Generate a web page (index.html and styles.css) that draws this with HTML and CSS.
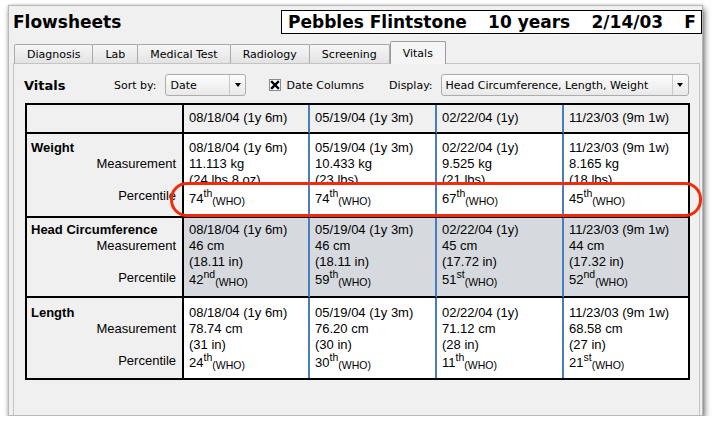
FILE: index.html
```html
<!DOCTYPE html>
<html lang="en">
<head>
  <meta charset="UTF-8" />
  <title>Flowsheets</title>
  <link rel="stylesheet" href="styles.css">
</head>
<body>

<div class="window">
  <div class="titlebar">
    <h1 class="title">Flowsheets</h1>
    <div class="patient">
      <span>Pebbles Flintstone</span><span>10 years</span><span>2/14/03</span><span>F</span>
    </div>
  </div>

  <div class="tabs">
    <div class="tab">Diagnosis</div>
    <div class="tab">Lab</div>
    <div class="tab">Medical Test</div>
    <div class="tab">Radiology</div>
    <div class="tab">Screening</div>
    <div class="tab active">Vitals</div>
  </div>

  <div class="panel">
    <div class="toolbar">
      <span class="section">Vitals</span>
      <span>Sort by:</span>
      <div class="select sel-date"><span>Date</span><span class="drop"></span></div>
      <svg class="check" width="12" height="12" viewBox="0 0 12 12">
        <rect x="0.5" y="0.5" width="11" height="11" fill="#fff" stroke="#8a8a8a"/>
        <path d="M3 3 L9 9 M9 3 L3 9" stroke="#000" stroke-width="2.4" stroke-linecap="square"/>
      </svg>
      <span class="check-label">Date Columns</span>
      <span class="display-label">Display:</span>
      <div class="select sel-display"><span>Head Circumference, Length, Weight</span><span class="drop"></span></div>
    </div>

    <div class="grid-wrap">
      <table class="vitals">
        <tr class="head">
          <th class="lab c0"></th>
          <th class="c1">08/18/04 (1y 6m)</th>
          <th class="c2">05/19/04 (1y 3m)</th>
          <th class="c3">02/22/04 (1y)</th>
          <th class="c4">11/23/03 (9m 1w)</th>
        </tr>
        <tr class="weight">
          <td class="lab">
            <div class="name">Weight</div>
            <div class="r">Measurement</div>
            <div class="r">&nbsp;</div>
            <div class="r">Percentile</div>
          </td>
          <td>
            <div class="meas"><div>08/18/04 (1y 6m)</div><div>11.113 kg</div><div>(24 lbs 8 oz)</div></div>
            <div class="pct">74<sup>th</sup><sub>(WHO)</sub></div>
          </td>
          <td>
            <div class="meas"><div>05/19/04 (1y 3m)</div><div>10.433 kg</div><div>(23 lbs)</div></div>
            <div class="pct">74<sup>th</sup><sub>(WHO)</sub></div>
          </td>
          <td>
            <div class="meas"><div>02/22/04 (1y)</div><div>9.525 kg</div><div>(21 lbs)</div></div>
            <div class="pct">67<sup>th</sup><sub>(WHO)</sub></div>
          </td>
          <td>
            <div class="meas"><div>11/23/03 (9m 1w)</div><div>8.165 kg</div><div>(18 lbs)</div></div>
            <div class="pct">45<sup>th</sup><sub>(WHO)</sub></div>
          </td>
        </tr>
        <tr class="head-circ">
          <td class="lab">
            <div class="name">Head Circumference</div>
            <div class="r">Measurement</div>
            <div class="r">&nbsp;</div>
            <div class="r">Percentile</div>
          </td>
          <td><div>08/18/04 (1y 6m)</div><div>46 cm</div><div>(18.11 in)</div><div class="pct">42<sup>nd</sup><sub>(WHO)</sub></div></td>
          <td><div>05/19/04 (1y 3m)</div><div>46 cm</div><div>(18.11 in)</div><div class="pct">59<sup>th</sup><sub>(WHO)</sub></div></td>
          <td><div>02/22/04 (1y)</div><div>45 cm</div><div>(17.72 in)</div><div class="pct">51<sup>st</sup><sub>(WHO)</sub></div></td>
          <td><div>11/23/03 (9m 1w)</div><div>44 cm</div><div>(17.32 in)</div><div class="pct">52<sup>nd</sup><sub>(WHO)</sub></div></td>
        </tr>
        <tr class="length">
          <td class="lab">
            <div class="name">Length</div>
            <div class="r">Measurement</div>
            <div class="r">&nbsp;</div>
            <div class="r">Percentile</div>
          </td>
          <td><div>08/18/04 (1y 6m)</div><div>78.74 cm</div><div>(31 in)</div><div class="pct">24<sup>th</sup><sub>(WHO)</sub></div></td>
          <td><div>05/19/04 (1y 3m)</div><div>76.20 cm</div><div>(30 in)</div><div class="pct">30<sup>th</sup><sub>(WHO)</sub></div></td>
          <td><div>02/22/04 (1y)</div><div>71.12 cm</div><div>(28 in)</div><div class="pct">11<sup>th</sup><sub>(WHO)</sub></div></td>
          <td><div>11/23/03 (9m 1w)</div><div>68.58 cm</div><div>(27 in)</div><div class="pct">21<sup>st</sup><sub>(WHO)</sub></div></td>
        </tr>
      </table>
      <div class="highlight"></div>
    </div>
  </div>
</div>

</body>
</html>
```

FILE: styles.css
```css
body {
  margin: 0;
  background: #fff;
  font-family: "DejaVu Sans", sans-serif;
  font-size: 11px;
  color: #000;
}
.window {
  box-sizing: border-box;
  width: 695px;
  height: 411px;
  margin: 5px 0 0 8px;
  background: #f0f0f0;
  border: 1px solid #b8b8b8;
  box-shadow: 2px 4px 6px rgba(0,0,0,0.5), 0 0 3px rgba(0,0,0,0.2);
  display: flex;
  flex-direction: column;
}
.titlebar {
  display: flex;
  justify-content: space-between;
  align-items: center;
  padding: 4px 0 0 4px;
}
.title {
  margin: 0;
  font-size: 17px;
  font-weight: bold;
}
.patient {
  box-sizing: border-box;
  width: 421px;
  height: 24px;
  padding: 0 5px 0 6px;
  border: 1px solid #000;
  background: #fff;
  display: flex;
  justify-content: space-between;
  align-items: center;
  font-size: 17px;
  font-weight: bold;
}
.tabs {
  display: flex;
  align-items: flex-end;
  height: 22px;
  margin-top: 7px;
  padding-left: 5px;
  position: relative;
  z-index: 1;
}
.tab {
  box-sizing: border-box;
  height: 19px;
  padding: 1px 12px 0;
  line-height: 17px;
  border: 1px solid #a9a9a9;
  border-bottom: none;
  border-radius: 2px 2px 0 0;
  margin-right: -1px;
  background: linear-gradient(#f6f6f6, #e3e3e3);
}
.tab.active {
  height: 23px;
  padding-top: 3px;
  margin: 0 0 -1px 1px;
  border-color: #9c9c9c;
  background: #f5f5f5;
}
.panel {
  flex: 1;
  margin: 0 2px 0 4px;
  border: 1px solid #c4c4c4;
  border-bottom: none;
  background: #f0f0f0;
}
.toolbar {
  display: flex;
  align-items: center;
  height: 22px;
  margin: 10px 0 0 10px;
}
.section {
  width: 90px;
  font-size: 13px;
  font-weight: bold;
}
.select {
  box-sizing: border-box;
  height: 22px;
  padding-left: 4px;
  border: 1px solid #acacac;
  border-radius: 3px;
  background: linear-gradient(#fcfcfc, #e9e9e9);
  display: flex;
  align-items: center;
}
.select .drop {
  margin-left: auto;
  width: 15px;
  height: 100%;
  border-left: 1px solid #c8c8c8;
  display: flex;
  align-items: center;
  justify-content: center;
}
.select .drop::after {
  content: "";
  border: 3.5px solid transparent;
  border-top: 4px solid #000;
  border-bottom: 0;
}
.sel-date {
  width: 81px;
  margin-left: 9px;
}
.check {
  margin-left: 23px;
}
.check-label {
  margin-left: 5px;
}
.display-label {
  margin-left: 25px;
}
.sel-display {
  width: 248px;
  margin-left: 8px;
}
.grid-wrap {
  position: relative;
  width: 665px;
  margin: 7px 0 0 11px;
}
table.vitals {
  box-sizing: border-box;
  width: 665px;
  table-layout: fixed;
  border-collapse: separate;
  border-spacing: 0;
  border: 2px solid #000;
  font-family: "Liberation Sans", Arial, sans-serif;
  font-size: 13px;
  line-height: 16px;
}
th, td {
  box-sizing: border-box;
  vertical-align: top;
  text-align: left;
  font-weight: normal;
  padding: 0 4px 0 5px;
  border-right: 2px solid #4a7ebb;
  border-bottom: 2px solid #000;
  background: #fff;
  white-space: nowrap;
}
th:last-child, td:last-child {
  border-right: none;
}
tr:last-child td {
  border-bottom: none;
}
.c0 { width: 157px; }
.c1 { width: 126px; }
.c2 { width: 127px; }
.c3 { width: 127px; }
.c4 { width: 124px; }
th {
  background: #f0f0f0;
}
.head { height: 29px; }
.head th { padding-top: 5px; }
.weight { height: 84px; }
.weight td { padding-top: 6px; }
.head-circ { height: 80px; }
.head-circ td { padding-top: 4px; background: #d6dade; }
.length { height: 80px; }
.length td { padding-top: 7px; }
td.lab, th.lab {
  background: #f0f0f0;
  border-right-color: #000;
  padding: 0 6px 0 4px;
}
.head-circ td.lab { background: #f0f0f0; padding-top: 4px; }
.weight td.lab { padding-top: 6px; }
.length td.lab { padding-top: 7px; }
.lab .name {
  font-weight: bold;
}
.lab .r {
  text-align: right;
}
.meas {
  height: 43px;
  overflow: hidden;
}
.pct {
  padding-top: 1.5px;
}
.weight .pct {
  padding-top: 0;
  margin-top: 8px;
}
sup, sub {
  font-size: 10.5px;
  line-height: 0;
}
sup { vertical-align: 6px; }
sub { vertical-align: -2px; }
.highlight {
  position: absolute;
  left: 145px;
  top: 79px;
  width: 532px;
  height: 35px;
  box-sizing: border-box;
  border: 3.5px solid #f42a0c;
  border-radius: 17px;
}
```
